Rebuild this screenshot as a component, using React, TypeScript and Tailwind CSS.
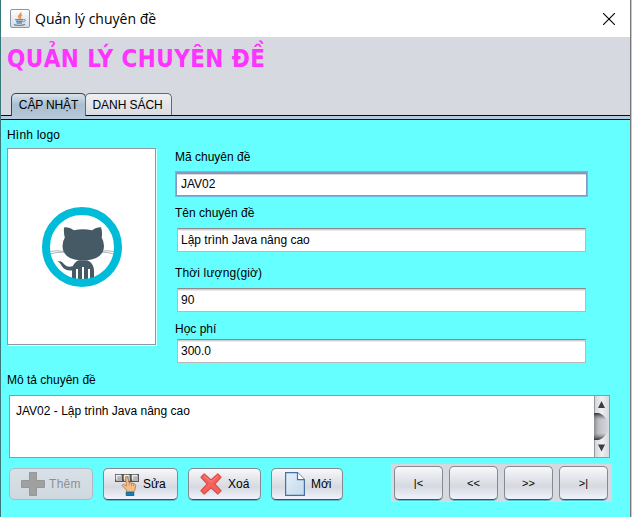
import React from 'react';

const font = "font-['Liberation_Sans',Arial,sans-serif]";

function JavaIcon() {
  return (
    <svg width="20" height="20" viewBox="0 0 20 20">
      <defs>
        <linearGradient id="jv" x1="0" y1="0" x2="0" y2="1">
          <stop offset="0" stopColor="#fff" />
          <stop offset="1" stopColor="#d3dbe4" />
        </linearGradient>
      </defs>
      <rect x=".5" y=".5" width="19" height="18" rx="1.5" fill="url(#jv)" stroke="#8798a8" />
      <path d="M10.800 3.500c1 1.800-2.800 2.700-2.200 4.300.3.900 1.100 1.100 1 1.900M12 6c-1.800.8-2.100 1.500-1.500 2.300.3.500.2.900-.1 1.400" fill="none" stroke="#ee9448" strokeWidth="1.500" />
      <path d="M5.200 10.600h8.200M6 12.300h6.800M6.600 14h5.400M4 15.700c2 1 8.500.900 11-.3" fill="none" stroke="#6488a8" strokeWidth="1.300" />
      <path d="M13.600 10.600c2.400-.6 2.300 1.700-.4 2.500" fill="none" stroke="#6488a8" />
    </svg>
  );
}

function CatLogo() {
  return (
    <svg width="80" height="80" viewBox="0 0 80 80">
      <circle cx="40" cy="40" r="36" fill="#fff" />
      <g fill="none" stroke="#8b969c" strokeWidth=".7">
        <path d="M8 44.500q7-1.600 14 0M8 47q7-2.300 14-1.800M58 44.500q7-1.600 14 0M58 45.200q7-.5 14 1.800" />
      </g>
      <path d="M22 20.400q5-.8 10 2.800 9-1.800 18 0 5-3.600 9.200-2.800 1.300 5 .5 10.300Q62 34 62 39c0 10-9 14.300-21 14.300S20.500 49 20.500 39q0-5 2.300-8.300-1.300-5-.8-10.300z" fill="#455a64" />
      <path d="M30 73V63.500c-5.500.3-8.500-1.500-10.500-5-1.300-2.300-2-3-3.800-4 3.300-1 5 1 7 3.200 2 2 4.300 2.500 8 1.500 1.300-3 3.500-5.200 6.300-6h8c4.500 1.300 7 6 7 10.300V73z" fill="#455a64" />
      <path d="M35 62v12M41 60v14M47 62v12" stroke="#fff" strokeWidth="2" />
      <circle cx="40" cy="40" r="36" fill="none" stroke="#00bcd8" strokeWidth="8" />
    </svg>
  );
}

function PlusIcon() {
  return (
    <svg width="24" height="24" viewBox="0 0 24 24">
      <path d="M8.500.5h7v8h8v7h-8v8h-7v-8h-8v-7h8z" fill="#a0a0a0" stroke="#979797" />
    </svg>
  );
}

function EditIcon() {
  return (
    <svg width="24" height="24" viewBox="0 0 24 24">
      {[0, 8, 16].map((x) => (
        <g key={x}>
          <rect x={x + 0.5} y="2.500" width="7" height="7" fill="#b4b4b4" stroke="#555" />
          <path d={`M${x + 1.5} 7.500v-4h4.500`} fill="none" stroke="#eee" strokeWidth="1.500" />
        </g>
      ))}
      <path d="M11.500 20v-2L7 13.500l1.200-1.400 3.300 1.900-1-9 2-.5 1.400 5.800 5.600 1.400 1.200 1.800-.7 4-1.200 2.500z" fill="#f0bd8b" stroke="#ae7546" strokeWidth=".8" />
      <path d="M14.300 10.500v3M16.500 11v3M18.600 12v2" stroke="#b98052" strokeWidth=".7" />
      <path d="M11.200 20.300h7.600v3.300h-7.600z" fill="#0785c2" stroke="#15516d" strokeWidth=".8" />
    </svg>
  );
}

function DeleteIcon() {
  return (
    <svg width="22" height="22" viewBox="0 0 22 22">
      <path d="M4.200 1l6.800 6L17.800 1 21 4.200 14.700 11l6.300 6.800L17.800 21 11 14.700 4.200 21 1 17.800 7.300 11 1 4.200z" fill="#f4625c" stroke="#dc514d" strokeLinejoin="round" strokeWidth="1.300" />
      <path d="M4.200 2.800l6.800 6 6.800-6" fill="none" stroke="#ff8b80" strokeWidth="1" />
    </svg>
  );
}

function FileIcon() {
  return (
    <svg width="20" height="24" viewBox="0 0 20 24">
      <defs>
        <linearGradient id="paper" x1="0" y1="0" x2="1" y2="1">
          <stop offset="0" stopColor="#e3eff9" />
          <stop offset="1" stopColor="#c4dae9" />
        </linearGradient>
      </defs>
      <path d="M.6.600h11.900l6.900 7v15.800H.6z" fill="url(#paper)" stroke="#4670a5" strokeWidth="1.200" />
      <path d="M12.500.6v7h6.900" fill="#fff" stroke="#4670a5" strokeWidth="1.200" />
    </svg>
  );
}

const raised =
  'flex items-center rounded-[5px] border border-[#858991] border-b-[#484c55] bg-linear-to-b from-[#f7f8fa] via-[#d6d9e0] via-60% to-[#f0f3fc] shadow-[0_1px_0_#52beca]';

function Field({ value, gap }: { value: string; gap: string }) {
  return (
    <div className={`${gap} ml-[2px] flex h-6 w-[409px] items-center border border-[#b9b9bb] border-t-[#8b8b8e] bg-white pl-[3px] shadow-[inset_0_1px_0_#cfcfd0,inset_0_2px_0_#e9e9ea]`}>
      {value}
    </div>
  );
}

function NavButton({ label }: { label: string }) {
  return <button className={`${raised} h-[34px] w-[49px] justify-center text-[11px]`}>{label}</button>;
}

export default function App() {
  return (
    <div className={`${font} flex h-[517px] w-[632px] overflow-hidden border-l border-[#39777a] bg-[#c9c9cb] text-[12px] leading-[14px] text-black`}>
      <div className="flex w-[630px] flex-col border-r border-[#777] bg-[#66ffff]">
        <header className="flex h-[37px] shrink-0 items-center bg-white pl-[9px]">
          <JavaIcon />
          <span className="ml-[5px] font-['Open_Sans',sans-serif] text-[14px] leading-5">Quản lý chuyên đề</span>
          <svg className="ml-auto mr-[15px]" width="12" height="12" viewBox="0 0 12 12">
            <path d="M0 0l12 12M12 0L0 12" stroke="#000" strokeWidth="1.100" />
          </svg>
        </header>
        <div className="flex h-[79px] shrink-0 flex-col justify-between border-b border-[#080818] bg-[#d6d9e0]">
          <h1 className="mt-[6px] pl-1.5 font-['DejaVu_Sans_Condensed','DejaVu_Sans',sans-serif] text-[24px] leading-8 font-bold font-stretch-condensed tracking-[0.4px] whitespace-nowrap text-[#ff33ff]">QUẢN LÝ CHUYÊN ĐỀ</h1>
          <nav className="flex pl-2.5">
            <div className="-mb-px flex h-[23px] w-[75px] items-center justify-center rounded-t-[5px] border border-b-0 border-[#35445b] bg-linear-to-b from-[#d9e2eb] via-[#a9bed0] via-50% to-[#b4c6d9] tracking-[-0.15px] whitespace-nowrap">CẬP NHẬT</div>
            <div className="-ml-px flex h-[22px] w-[87px] items-center rounded-t-[5px] border border-b-0 border-[#66686f] bg-linear-to-b from-[#eff0f2] to-[#dadce2] pl-[6.5px] tracking-[-0.05px] whitespace-nowrap">DANH SÁCH</div>
          </nav>
        </div>
        <div className="h-1 shrink-0 border-b border-[#080818] bg-[#b5c9dd]" />
        <main className="flex h-[397px] flex-col">
          <div className="flex h-[253px] shrink-0 pl-1.5">
            <section className="w-[168px]">
              <div className="mt-2 tracking-[0.2px]">Hình logo</div>
              <div className="mt-[6px] flex h-[197px] w-[149px] items-center justify-center border border-[#9297a1] bg-white shadow-[1px_1px_0_#d9ffff]">
                <CatLogo />
              </div>
            </section>
            <section>
              <div className="mt-[30px]">Mã chuyên đề</div>
              <div className="mt-[7px] flex h-[26px] w-[413px] items-center border border-[#6fb8e3] bg-white pl-[5px] shadow-[inset_0_0_0_1px_#8399c6,inset_0_2px_0_#8f94a6,inset_0_3px_0_#dadada]">JAV02</div>
              <div className="mt-[9px]">Tên chuyên đề</div>
              <Field value="Lập trình Java nâng cao" gap="mt-2" />
              <div className="mt-[14px] tracking-[0.15px]">Thời lượng(giờ)</div>
              <Field value="90" gap="mt-2" />
              <div className="mt-[10px]">Học phí</div>
              <Field value="300.0" gap="mt-[3px]" />
            </section>
          </div>
          <div className="pl-1.5">Mô tả chuyên đề</div>
          <div className="mt-2 ml-2 flex h-[63px] w-[601px] shrink-0 border border-[#9297a1] bg-white">
            <div className="flex-1 pt-2 pl-1.5">JAV02 - Lập trình Java nâng cao</div>
            <svg width="15" height="61" viewBox="0 0 15 61">
              <defs>
                <linearGradient id="track">
                  <stop offset="0" stopColor="#d0d3d7" />
                  <stop offset=".5" stopColor="#eef0f2" />
                  <stop offset="1" stopColor="#d7dade" />
                </linearGradient>
                <linearGradient id="thumb">
                  <stop offset="0" stopColor="#8c8c94" />
                  <stop offset=".3" stopColor="#bebec6" />
                  <stop offset="1" stopColor="#d7d7df" />
                </linearGradient>
                <linearGradient id="edge" x1="0" y1="0" x2="0" y2="1">
                  <stop offset="0" stopColor="#333" />
                  <stop offset=".25" stopColor="#777" stopOpacity="0" />
                  <stop offset=".75" stopColor="#777" stopOpacity="0" />
                  <stop offset="1" stopColor="#333" />
                </linearGradient>
              </defs>
              <rect width="15" height="61" fill="url(#track)" />
              <path d="M.5 0v61" stroke="#9297a1" />
              <path d="M0 17h4c5 1 8 5 10.500 9v8C12 39 9 43 4 44H0z" fill="url(#thumb)" />
              <path d="M0 17h4c5 1 8 5 10.500 9v8C12 39 9 43 4 44H0z" fill="url(#edge)" />
              <path d="M7.500 5l3.500 7H4zM7.500 55.500l3.500-7H4z" fill="#3b3d41" />
            </svg>
          </div>
          <div className="mt-[6px] ml-2 flex">
            <div className="mt-1 flex h-8 gap-2.5 whitespace-nowrap">
              <button className="flex w-[84px] items-center gap-1 rounded-[5px] border border-[#aeb9c2] bg-linear-to-b from-[#d7e1e8] to-[#d0d7df] pl-[11px] tracking-[0.3px] text-[#8e8f91]"><PlusIcon />Thêm</button>
              <button className={`${raised} w-[75px] gap-1 pl-[11px]`}><EditIcon />Sửa</button>
              <button className={`${raised} w-[73px] gap-1.5 pl-[11px]`}><DeleteIcon />Xoá</button>
              <button className={`${raised} w-[72px] gap-1.5 pl-[13px]`}><FileIcon />Mới</button>
            </div>
            <div className="ml-12 flex h-[38px] w-[221px] gap-1.5 bg-[#d6d9e0] pt-[2px] pl-[3px]">
              <NavButton label="|<" />
              <NavButton label="<<" />
              <NavButton label=">>" />
              <NavButton label=">|" />
            </div>
          </div>
        </main>
      </div>
    </div>
  );
}
